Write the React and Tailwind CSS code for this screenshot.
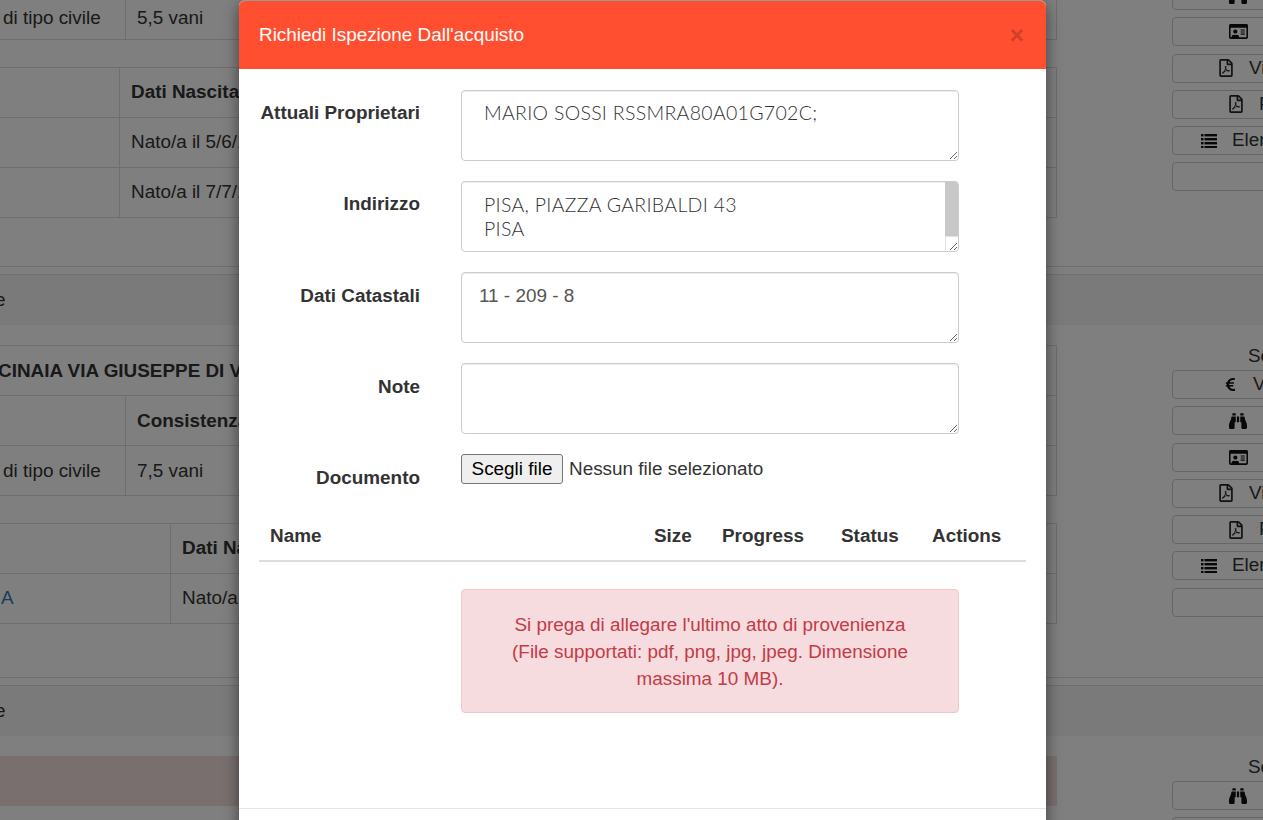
import { FaBinoculars, FaEuroSign, FaRegFilePdf, FaRegIdCard } from 'react-icons/fa';

const PAGE_FONT = "font-['Liberation_Sans',Arial,sans-serif]";

function ListIcon() {
  const rows = [0, 4, 8, 12];
  return (
    <svg width="16" height="14" viewBox="0 0 16 14" fill="#111" className="block">
      {rows.map((y) => (
        <g key={y}>
          <rect x="0" y={y} width="2.5" height="2.4" />
          <rect x="3.5" y={y} width="12.5" height="2.4" />
        </g>
      ))}
    </svg>
  );
}

function SideButton({ icon, label, labelClass = '', gap = 'gap-[14px]', pad = 'pl-[54px]' }) {
  return (
    <div className={`h-[29px] w-[200px] shrink-0 border border-[#ccc] rounded-[4px] flex items-center text-[18.9px] leading-none whitespace-nowrap ${gap} ${pad}`}>
      {icon && <span className="shrink-0 text-[#111]">{icon}</span>}
      {label && <span className={labelClass}>{label}</span>}
    </div>
  );
}

const pdfIcon = <FaRegFilePdf className="text-[#222] text-[18px]" />;
const cardIcon = <FaRegIdCard className="text-[19px]" />;
const binoculars = <FaBinoculars className="text-[18px]" />;

const BUTTONS = {
  card: { icon: cardIcon, pad: 'pl-[56px]' },
  visura: { icon: pdfIcon, label: 'Visura', pad: 'pl-[44px]' },
  plan: { icon: pdfIcon, label: 'Planimetria', pad: 'pl-[54px]' },
  list: { icon: <ListIcon />, label: 'Elenco', pad: 'pl-[28px]', gap: 'gap-[15px]' },
  euro: { icon: <FaEuroSign className="text-[15px]" />, label: 'Valuta', pad: 'pl-[50px]', gap: 'gap-[15px]' },
  binoculars: { icon: binoculars, label: 'Ispeziona', labelClass: 'text-[#f0ad4e]', pad: 'pl-[56px]', gap: 'gap-[16px]' },
  empty: {},
};

function SideButtons({ items, className = '' }) {
  return (
    <div className={`flex flex-col gap-[7.25px] ${className}`}>
      {items.map((name, i) => (
        <SideButton key={i} {...BUTTONS[name]} />
      ))}
    </div>
  );
}

function DataTable({ cols, rows, className = '', cellClass = '' }) {
  return (
    <div className={`border-t border-r border-[#ddd] ${className}`}>
      {rows.map((row, i) => (
        <div key={i} className={`grid ${cols} h-[50px] border-b border-[#ddd]`}>
          {row.map((cell, j) => (
            <div
              key={j}
              className={`flex items-center whitespace-nowrap overflow-hidden ${cellClass} ${j > 0 ? 'border-l border-[#ddd] pl-[11px]' : ''} ${cell.className || ''}`}
            >
              {cell.text}
            </div>
          ))}
        </div>
      ))}
    </div>
  );
}

function SectionHeading() {
  return (
    <div className="h-[51px] shrink-0 bg-[#f5f5f5] border-t border-[#ddd] flex items-center">
      <span className="-ml-[5px]">e</span>
    </div>
  );
}

function BackgroundPage() {
  return (
    <div className="flex flex-col text-[18.9px] text-[#333]">
      {/* first property, scrolled partly out of view */}
      <div className="h-[266px] flex shrink-0">
        <div className="w-[1057px] shrink-0">
          <div className="grid grid-cols-[125px_1fr] h-[40px] border-b border-r border-[#ddd]">
            <div className="pl-[3px] pt-[4px]">di tipo civile</div>
            <div className="border-l border-[#ddd] pl-[11px] pt-[4px]">5,5 vani</div>
          </div>
          <DataTable
            className="mt-[27px]"
            cols="grid-cols-[119px_1fr]"
            rows={[
              [{ text: '' }, { text: 'Dati Nascita', className: 'font-bold' }],
              [{ text: '' }, { text: 'Nato/a il 5/6/1975' }],
              [{ text: '' }, { text: 'Nato/a il 7/7/1980' }],
            ]}
          />
        </div>
        <div className="ml-[115px]">
          <SideButtons className="-mt-[19px]" items={['binoculars', 'card', 'visura', 'plan', 'list', 'empty']} />
        </div>
      </div>

      <div className="h-[8px] shrink-0 border-t border-[#ddd]" />
      <SectionHeading />

      {/* second property */}
      <div className="h-[352px] flex shrink-0">
        <div className="w-[1057px] shrink-0 pt-[20px]">
          <DataTable
            cols="grid-cols-[125px_1fr]"
            cellClass="pt-[2px]"
            rows={[
              [{ text: <span className="-ml-[2px] font-bold">CINAIA VIA GIUSEPPE DI VITTORIO</span>, className: 'col-span-2' }],
              [{ text: '' }, { text: 'Consistenza', className: 'font-bold' }],
              [{ text: <span className="pl-[3px]">di tipo civile</span> }, { text: '7,5 vani' }],
            ]}
          />
          <DataTable
            className="mt-[27px]"
            cols="grid-cols-[170px_1fr]"
            rows={[
              [{ text: '' }, { text: 'Dati Nascita', className: 'font-bold' }],
              [{ text: <span className="pl-[1px] text-[#337ab7]">A</span> }, { text: 'Nato/a il 1/1/1970' }],
            ]}
          />
        </div>
        <div className="ml-[115px] flex flex-col">
          <div className="pl-[76px] pt-[17px] leading-[28px] whitespace-nowrap">Seleziona</div>
          <SideButtons items={['euro', 'binoculars', 'card', 'visura', 'plan', 'list', 'empty']} />
        </div>
      </div>

      <div className="h-[8px] shrink-0 border-t border-[#ddd]" />
      <SectionHeading />

      {/* third property */}
      <div className="flex shrink-0">
        <div className="w-[1057px] shrink-0 pt-[20px]">
          <div className="h-[50px] bg-[#f2dede]" />
        </div>
        <div className="ml-[115px] flex flex-col">
          <div className="pl-[76px] pt-[17px] leading-[28px] whitespace-nowrap">Seleziona</div>
          <SideButtons items={['binoculars', 'card']} />
        </div>
      </div>
    </div>
  );
}

const RALEWAY_LIKE = "font-['Lato',sans-serif] text-[#333] text-[19.5px] tracking-[0.3px] leading-[24px] font-light";

function FormRow({ label, labelPad = 'pt-[10px]', children }) {
  return (
    <div className="flex">
      <label className={`w-[161px] shrink-0 text-right font-bold text-[18.9px] leading-[26px] text-[#333] ${labelPad}`}>
        {label}
      </label>
      <div className="ml-[41px] w-[498px]">{children}</div>
    </div>
  );
}

function Field({ value, className = '' }) {
  return (
    <textarea
      readOnly
      defaultValue={value}
      className={`block w-full h-[71px] border border-[#ccc] rounded-[4px] outline-none shadow-[inset_0_1px_1px_rgba(0,0,0,0.075)] ${className}`}
    />
  );
}

function InspectionModal() {
  return (
    <div className="absolute left-[239px] top-0 w-[807px] h-[840px] bg-white rounded-[6px] border-t border-[#999] shadow-[0_5px_15px_rgba(0,0,0,0.5)] overflow-hidden">
      <div className="h-[68px] bg-[#ff4f30] flex items-center justify-between pl-[20px] pr-[22px]">
        <h4 className="text-white text-[18.9px]">Richiedi Ispezione Dall'acquisto</h4>
        <span className="text-black/20 font-bold text-[25px] leading-none">×</span>
      </div>

      <div className="px-[20px] pt-[21px]">
        <div className="flex flex-col gap-[20px]">
          <FormRow label="Attuali Proprietari">
            <Field value="MARIO SOSSI RSSMRA80A01G702C;" className={`${RALEWAY_LIKE} pl-[22px] pt-[10px]`} />
          </FormRow>
          <FormRow label="Indirizzo">
            <div className="relative">
              <Field value={'PISA, PIAZZA GARIBALDI 43\nPISA\n\n\n'} className={`${RALEWAY_LIKE} pl-[22px] pt-[11px] overflow-hidden`} />
              {/* scrollbar thumb and resizer box */}
              <div className="absolute right-[1px] top-[1px] w-[13px] h-[54px] bg-[#c8c8c8] rounded-tr-[3px]" />
              <div className="absolute right-[1px] top-[55px] w-[13px] h-[14px] border-t border-l border-[#e2e2e2] pointer-events-none" />
            </div>
          </FormRow>
          <FormRow label="Dati Catastali" labelPad="pt-[11px]">
            <Field value="11 - 209 - 8" className="text-[18.9px] leading-[26px] text-[#555] pl-[17px] pt-[10px]" />
          </FormRow>
          <FormRow label="Note" labelPad="pt-[11px]">
            <Field value="" className="text-[18.9px]" />
          </FormRow>
          <FormRow label="Documento" labelPad="pt-[11px]">
            <div className="flex items-center text-[18.9px] text-[#333]">
              <button type="button" className="h-[30px] w-[102px] bg-[#efefef] border border-[#767676] rounded-[3px] text-[18.9px] text-black">
                Scegli file
              </button>
              <span className="ml-[6px]">Nessun file selezionato</span>
            </div>
          </FormRow>
        </div>

        <div className="mt-[21px] flex items-center h-[50px] pt-[1px] border-b-2 border-[#ddd] font-bold text-[18.9px] text-[#333] pl-[11px]">
          <span className="w-[384px]">Name</span>
          <span className="w-[68px]">Size</span>
          <span className="w-[119px]">Progress</span>
          <span className="w-[91px]">Status</span>
          <span>Actions</span>
        </div>

        <div className="ml-[202px] w-[498px] mt-[27px] h-[124px] bg-[#f6dcde] border border-[#f5c6cb] rounded-[4px] text-[#c23b47] text-[18.9px] leading-[27px] text-center px-[20px] py-[21px]">
          Si prega di allegare l'ultimo atto di provenienza
          <br />
          (File supportati: pdf, png, jpg, jpeg. Dimensione massima 10 MB).
        </div>
      </div>

      <div className="mt-[95px] border-t border-[#e5e5e5]" />
    </div>
  );
}

export default function App() {
  return (
    <div className={`relative h-[820px] w-full overflow-hidden bg-white ${PAGE_FONT}`}>
      <BackgroundPage />
      <div className="absolute inset-0 bg-black/50" />
      <InspectionModal />
    </div>
  );
}
